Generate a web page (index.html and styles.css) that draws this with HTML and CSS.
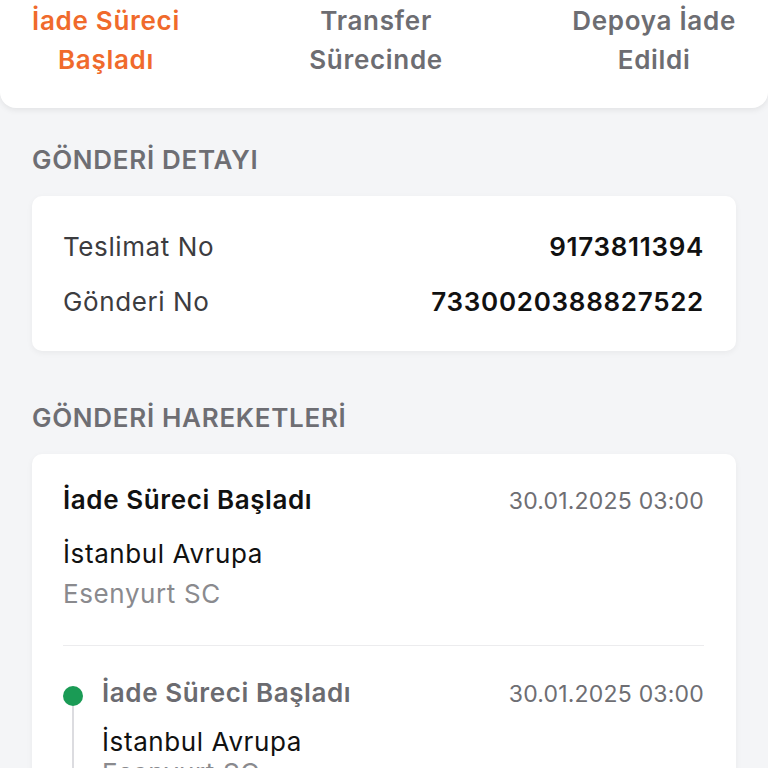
FILE: index.html
```html
<!DOCTYPE html>
<html lang="tr">
<head>
    <meta charset="UTF-8">
    <meta name="viewport" content="width=device-width, initial-scale=1.0">
    <title>Gönderi Takip</title>
    <link rel="stylesheet" href="styles.css">
</head>
<body>
    <div class="steps">
        <div class="step active">İade Süreci<br>Başladı</div>
        <div class="step">Transfer<br>Sürecinde</div>
        <div class="step">Depoya İade<br>Edildi</div>
    </div>

    <h3 class="section-title first">GÖNDERİ DETAYI</h3>
    <div class="card detail-card">
        <div class="detail-row">
            <span class="label">Teslimat No</span>
            <span class="value">9173811394</span>
        </div>
        <div class="detail-row">
            <span class="label">Gönderi No</span>
            <span class="value">7330020388827522</span>
        </div>
    </div>

    <h3 class="section-title">GÖNDERİ HAREKETLERİ</h3>
    <div class="card moves-card">
        <div class="last-move">
            <div class="move-head">
                <span class="move-title">İade Süreci Başladı</span>
                <span class="move-date">30.01.2025 03:00</span>
            </div>
            <div class="move-city">İstanbul Avrupa</div>
            <div class="move-branch">Esenyurt SC</div>
        </div>
        <div class="timeline">
            <div class="tl-item">
                <div class="tl-mark">
                    <span class="dot"></span>
                    <span class="line"></span>
                </div>
                <div class="tl-body">
                    <div class="move-head">
                        <span class="move-title muted">İade Süreci Başladı</span>
                        <span class="move-date">30.01.2025 03:00</span>
                    </div>
                    <div class="move-city">İstanbul Avrupa</div>
                    <div class="move-branch">Esenyurt SC</div>
                </div>
            </div>
        </div>
    </div>
</body>
</html>
```

FILE: styles.css
```css
body {
    font-family: Inter, "Noto Sans", sans-serif;
    background-color: #f4f5f7;
    margin: 0;
    height: 768px;
    overflow: hidden;
    color: #111;
}
.steps {
    background: #fff;
    display: flex;
    justify-content: space-between;
    padding: 1px 32px 29px;
    border-radius: 0 0 16px 16px;
    box-shadow: 0 2px 6px rgba(0, 0, 0, 0.08);
}
.step {
    text-align: center;
    font-size: 26px;
    font-weight: 600;
    line-height: 39px;
    color: #6d6d72;
    letter-spacing: 0.7px;
}
.step.active {
    color: #f06a2c;
}
.section-title {
    margin: 51px 32px 20px;
    font-size: 26px;
    font-weight: 600;
    line-height: 32px;
    color: #6e6e73;
    letter-spacing: 0.7px;
}
.section-title.first {
    margin-top: 36px;
}
.card {
    background: #fff;
    margin: 0 32px;
    border-radius: 10px;
    box-shadow: 0 2px 6px rgba(0, 0, 0, 0.05);
}
.detail-card {
    padding: 23px 32px 22px 31px;
}
.detail-row {
    display: flex;
    justify-content: space-between;
    align-items: center;
    height: 55px;
    font-size: 26px;
    letter-spacing: 0.6px;
}
.label {
    color: #3c3c3f;
}
.value {
    font-weight: 600;
    color: #111;
    letter-spacing: 0.7px;
}
.moves-card {
    padding: 30px 32px 0 31px;
}
.last-move {
    padding-bottom: 31px;
    border-bottom: 1px solid #ececee;
}
.move-head {
    display: flex;
    justify-content: space-between;
    align-items: baseline;
    line-height: 32px;
}
.move-title {
    font-size: 26px;
    font-weight: 600;
    color: #111;
    letter-spacing: 0.6px;
}
.move-title.muted {
    color: #6b6b70;
}
.move-date {
    font-size: 23px;
    color: #6e6e73;
    letter-spacing: 0.2px;
}
.move-city {
    margin-top: 17px;
    font-size: 26px;
    line-height: 40px;
    color: #111;
    letter-spacing: 0.6px;
}
.move-branch {
    font-size: 26px;
    line-height: 40px;
    color: #8a8a8e;
    letter-spacing: 0.6px;
}
.timeline {
    padding-top: 31px;
}
.tl-item {
    display: flex;
}
.tl-mark {
    flex: none;
    display: flex;
    flex-direction: column;
    align-items: center;
    padding-top: 9px;
    width: 20px;
    margin-right: 19px;
}
.dot {
    width: 20px;
    height: 20px;
    border-radius: 50%;
    background: #1a9b55;
    flex: none;
}
.line {
    width: 2px;
    flex: 1;
    background: #dcdce0;
}
.tl-body {
    flex: 1;
}
.tl-body .move-city {
    margin-top: 15px;
    line-height: 34px;
}
.tl-body .move-branch {
    line-height: 28px;
}
```
